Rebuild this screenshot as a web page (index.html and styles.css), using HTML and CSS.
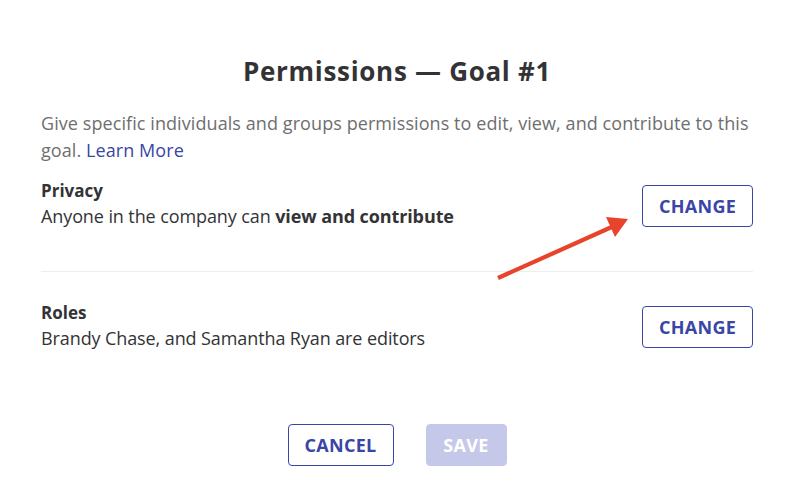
FILE: index.html
```html
<!DOCTYPE html>
<html>
<head>
<meta charset="utf-8">
<link rel="stylesheet" href="styles.css">
</head>
<body>
<div class="dialog">
  <h1 class="title">Permissions — Goal #1</h1>
  <p class="desc"><span>Give specific individuals and groups permissions to edit, view, and contribute to this goal.</span> <a class="link" href="#">Learn More</a></p>
  <div class="row row-first">
    <div class="info">
      <div class="label">Privacy</div>
      <div class="text">Anyone in the company can <b>view and contribute</b></div>
    </div>
    <button class="btn btn-outline btn-change">CHANGE</button>
  </div>
  <div class="sep"></div>
  <div class="row row-second">
    <div class="info">
      <div class="label">Roles</div>
      <div class="text">Brandy Chase, and Samantha Ryan are editors</div>
    </div>
    <button class="btn btn-outline btn-change">CHANGE</button>
  </div>
  <div class="footer">
    <button class="btn btn-outline btn-cancel">CANCEL</button>
    <button class="btn btn-disabled">SAVE</button>
  </div>
</div>
<svg class="arrow" width="794" height="498" viewBox="0 0 794 498">
  <line x1="498" y1="278" x2="614" y2="226" stroke="#e8432b" stroke-width="4.2" stroke-linecap="butt"/>
  <polygon points="628,219 606,217 615,237" fill="#e8432b"/>
</svg>
</body>
</html>
```
FILE: styles.css
```css
html, body {
  margin: 0;
  padding: 0;
  background: #fff;
}
body {
  font-family: "Open Sans", "Liberation Sans", sans-serif;
  color: #333336;
  width: 794px;
  height: 498px;
  position: relative;
  overflow: hidden;
}
.dialog {
  padding: 0 41px;
}
.title {
  margin: 0;
  padding-top: 55px;
  font-size: 26px;
  line-height: 32px;
  font-weight: 700;
  letter-spacing: 0.7px;
  text-align: center;
  color: #333336;
}
.desc {
  margin: 23px 0 0;
  font-size: 18px;
  line-height: 27px;
  letter-spacing: 0.08px;
  color: #6e6e70;
}
.link {
  color: #3a46a6;
  text-decoration: none;
}
.row {
  display: flex;
  justify-content: space-between;
  align-items: flex-start;
}
.row-first {
  margin-top: 15px;
}
.label {
  font-size: 17px;
  font-weight: 700;
  line-height: 24px;
}
.text {
  font-size: 18px;
  line-height: 27px;
  letter-spacing: -0.1px;
}
.text b {
  font-weight: 700;
}
.btn {
  font-family: inherit;
  font-weight: 700;
  font-size: 18px;
  letter-spacing: 0.3px;
  height: 42px;
  border-radius: 4px;
  padding: 0;
  cursor: pointer;
}
.btn-change {
  margin-top: 6px;
}
.row-second .btn-change {
  margin-top: 5px;
}
.btn-outline {
  background: #fff;
  border: 1px solid #3a46a6;
  color: #3a46a6;
  width: 111px;
}
.btn-cancel {
  width: 106px;
}
.btn-disabled {
  background: #c5c8e8;
  border: 1px solid #c5c8e8;
  color: #fff;
  width: 81px;
}
.sep {
  height: 1px;
  background: #eeeeef;
  margin: 41px 0 29px;
}
.footer {
  display: flex;
  justify-content: center;
  gap: 32px;
  margin-top: 72px;
}
.arrow {
  position: absolute;
  left: 0;
  top: 0;
  pointer-events: none;
}
```
